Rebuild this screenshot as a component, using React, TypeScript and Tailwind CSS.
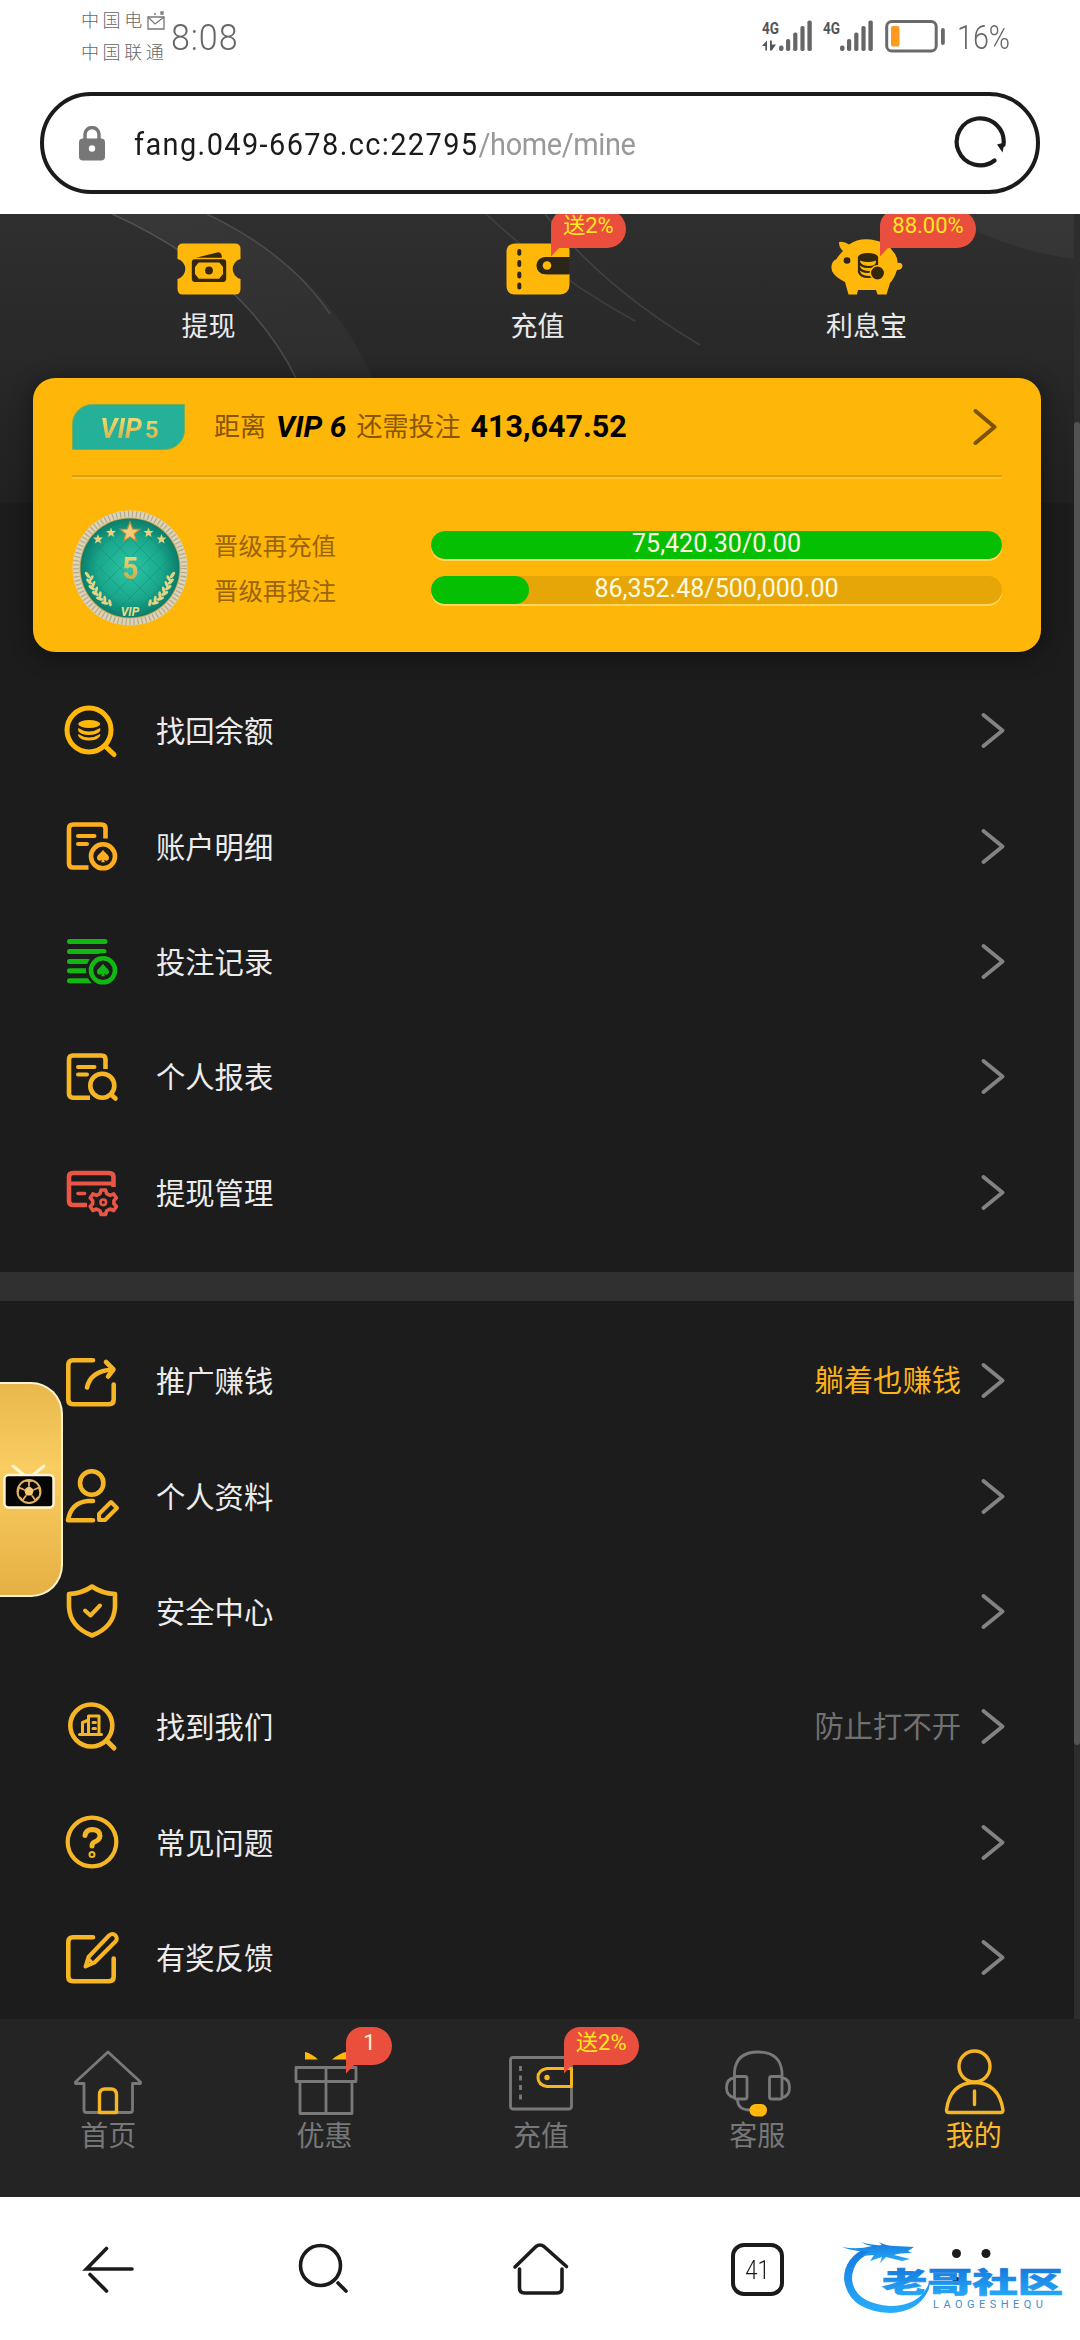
import type { ReactNode } from 'react';

const GOLD = '#ffb70a';
const LIST_GOLD = '#f5b524';

function StatusBar() {
  return (
    <div className="flex h-[92px] justify-between pl-[81px] pr-[74px] text-[#666]">
      <div className="flex">
        <div className="flex w-[90px] flex-col pt-[9px] text-[18px] font-light tracking-[3.6px] whitespace-nowrap">
          <div className="flex h-[32px] items-start leading-[24px]">
            <span>中国电</span>
            <svg width="20" height="20" viewBox="0 0 20 20" className="mt-[2px]" fill="none" stroke="#777" strokeWidth="1.3">
              <path d="M2 6 L2 18 L18 18 L18 6 Z" />
              <path d="M2 6 L9 13 L18 6" />
              <path d="M8 3h2M15 1h2v2h-2z" />
            </svg>
          </div>
          <div className="leading-[24px]">中国联通</div>
        </div>
        <div className="pt-[18px]">
          <span className="inline-block origin-left scale-x-[.92] text-[37px] leading-[40px] font-light tracking-[1px]">8:08</span>
        </div>
      </div>
      <div className="flex items-start pt-[20px]">
        <Signal arrows />
        <div className="w-[10px]" />
        <Signal />
        <svg width="60" height="34" viewBox="0 0 60 34" className="ml-[11px] -mt-px" fill="none">
          <rect x="1.7" y="2.5" width="49.5" height="29.5" rx="5" stroke="#6a6a6a" strokeWidth="3" />
          <rect x="6" y="7" width="8.5" height="20.5" rx="2" fill="#ff9a1e" />
          <rect x="56" y="9" width="3.8" height="17" rx="1.9" fill="#6a6a6a" />
        </svg>
        <span className="ml-[12px] inline-block w-[49px] origin-left scale-x-[.87] text-[33px] leading-[36px] font-light">16%</span>
      </div>
    </div>
  );
}

function Signal({ arrows = false }: { arrows?: boolean }) {
  return (
    <svg width="51" height="32" viewBox="0 0 51 32" className="overflow-visible">
      <text x="0" y="14" fontSize="17" fontWeight="700" fill="#555" textLength="17" lengthAdjust="spacingAndGlyphs">4G</text>
      {arrows && <path d="M0 26 L5 20.5 V30.5 H3.300 V26 Z M8 20.5 H9.800 V24.500 H14 L9.800 30.500 H8 Z" fill="#555" />}
      <g fill="#666">
        <rect x="17" y="25.5" width="4.5" height="5.5" rx="2" />
        <rect x="24" y="19" width="4.2" height="12" rx="1.8" />
        <rect x="31.2" y="12.5" width="4.2" height="18.5" rx="1.8" />
        <rect x="38.4" y="6" width="4.2" height="25" rx="1.8" />
        <rect x="45.4" y="0.5" width="4.4" height="30.5" rx="1.8" />
      </g>
    </svg>
  );
}

function AddressBar() {
  return (
    <div className="mx-[40px] flex h-[102px] items-center rounded-full border-4 border-[#1b1b1b] bg-white pl-[35px] pr-[30px]">
      <svg width="26" height="35" viewBox="0 0 26 35">
        <path d="M6 15 V8.5 a7 7 0 0 1 14 0 V15" fill="none" stroke="#777" strokeWidth="3.4" />
        <rect x="0" y="12.5" width="26" height="22" rx="4" fill="#777" />
        <circle cx="13" cy="22.5" r="3.2" fill="#fff" />
      </svg>
      <div className="ml-[29px] flex-1 pt-[2px] whitespace-nowrap">
        <span className="inline-block origin-left scale-x-[.904] text-[32px] leading-[40px] tracking-[1.55px] text-[#1b1b1b]">
          fang.049-6678.cc:22795<span className="tracking-[-.4px] text-[#999]">/home/mine</span>
        </span>
      </div>
      <svg width="52" height="54" viewBox="0 0 52 54" fill="none" className="-mt-px">
        <path d="M40.5 44.5 A23.5 23.5 0 1 1 49.5 29" stroke="#1b1b1b" strokeWidth="4.2" strokeLinecap="round" />
        <path d="M43 28.5 L50.5 26.5 L48.5 36.5 Z" fill="#1b1b1b" />
      </svg>
    </div>
  );
}

function Badge({ children, className }: { children: ReactNode; className: string }) {
  return (
    <div className={`absolute z-10 flex h-[38px] justify-center rounded-r-[19px] rounded-tl-[16px] bg-[#ea4f3d] pt-[3px] text-[22px] leading-[26px] ${className}`}>
      {children}
      <svg width="13" height="10" viewBox="0 0 13 10" className="absolute top-[37px] left-0">
        <path d="M0 0 H13 L8 1 L0 9.5 Z" fill="#ea4f3d" />
      </svg>
    </div>
  );
}

function HeaderBackdrop() {
  return (
    <svg width="1074" height="289" viewBox="0 0 1074 289" className="absolute top-0 left-0" fill="none">
      <defs>
        <linearGradient id="head" x1="0" y1="0" x2="0" y2="1">
          <stop offset="0" stopColor="#2f2f2f" />
          <stop offset="0.5" stopColor="#282828" />
          <stop offset="1" stopColor="#202020" />
        </linearGradient>
        <linearGradient id="band" x1="0" y1="0" x2="1" y2="1">
          <stop offset="0" stopColor="#fff" stopOpacity="0.04" />
          <stop offset="1" stopColor="#fff" stopOpacity="0.025" />
        </linearGradient>
      </defs>
      <rect width="1074" height="289" fill="url(#head)" />
      <path d="M112 0 Q245 60 297 166 H373 Q330 60 207 0 Z" fill="url(#band)" />
      <g stroke="#fff" strokeOpacity="0.15" strokeWidth="1.6">
        <path d="M112 0 Q245 60 297 166" />
        <path d="M207 0 Q290 40 330 100" strokeOpacity="0.12" />
        <path d="M486 0 Q550 60 635 107" strokeOpacity="0.09" />
        <path d="M545 0 Q605 75 700 131" strokeOpacity="0.1" />
      </g>
      <path d="M945 0 H1074 V45 Q1000 35 945 0 Z" fill="#fff" fillOpacity="0.04" />
    </svg>
  );
}

function CashIcon() {
  return (
    <svg width="64" height="52" viewBox="0 0 64 52">
      <path
        d="M6 0.5 H58 Q63.5 .5 63.5 6 V16 a10.3 10.3 0 0 0 0 20 V46 Q63.5 51.5 58 51.5 H6 Q.5 51.5 .5 46 V36 a10.3 10.3 0 0 0 0 -20 V6 Q.5 .5 6 .5 Z"
        fill={GOLD}
      />
      <path d="M19 14.8 L41 9.3 Q44.5 9 45 14.8 Z" fill="#33280d" />
      <rect x="16.4" y="17.8" width="31.2" height="19.5" rx="1.5" stroke="#33280d" strokeWidth="3.2" fill="none" />
      <path d="M18 19 h4 l-4 5 z M46 19 h-4 l4 5 z M18 36 h4 l-4 -5 z M46 36 h-4 l4 -5 z" fill="#33280d" />
      <circle cx="32" cy="27.5" r="3.9" fill="#33280d" />
    </svg>
  );
}

function WalletIcon() {
  return (
    <svg width="64" height="52" viewBox="0 0 64 52">
      <path d="M9 .5 H57 Q63.5 .5 63.5 7 V14 H40 a9.5 9.5 0 0 0 0 17.2 H63.5 V42 Q63 51 54 51.5 H9 Q.5 51 .5 43 V8 Q1 1 9 .5 Z" fill={GOLD} />
      <path d="M63 14 H39 a8.6 8.6 0 0 0 0 17.2 H63 Z" fill="#2c2619" />
      <path d="M13.3 8 V10.8 M13.3 19 V22 M13.3 30.5 V33.5 M13.3 41.5 V44.5" stroke="#2c2619" strokeWidth="4" strokeLinecap="round" />
      <circle cx="41" cy="22.5" r="4.3" fill={GOLD} />
    </svg>
  );
}

function PiggyIcon() {
  return (
    <svg width="72" height="56" viewBox="0 0 72 56">
      <path
        d="M8 3 Q13 2 18 5.5 Q27 -1 40 .5 Q57 2.500 64 15 Q67 20 66.500 24 Q71 23 71.500 27 Q71 31 66 31 Q63 40 59 44 L55.500 55.500 H46.500 L45 51 H27 L26 55.500 H17.500 L14 43 Q6 39 2.500 34.500 Q0 32 .5 27 Q1 22 5.500 20 Q8 16 12 12 Q8 9 8 3 Z"
        fill={GOLD}
      />
      <ellipse cx="16" cy="21.500" rx="3.400" ry="3.200" fill="#2c2619" />
      <g fill={GOLD} stroke="#33280d" strokeWidth="2.200">
        <path d="M28 28 V33 Q30 38 37 38 Q46 38 46 33 V28" />
        <path d="M28 23 V28 Q30 33 37 33 Q46 33 46 28 V23" />
        <path d="M28 18 V23 Q30 28 37 28 Q46 28 46 23 V18" />
        <ellipse cx="37" cy="18.500" rx="9" ry="3.500" fill="#33280d" />
      </g>
      <circle cx="46.500" cy="34" r="7.200" fill="#33280d" stroke={GOLD} strokeWidth="1.500" />
    </svg>
  );
}

function Shortcut({ icon, label, badge, badgeClass = '' }: { icon: ReactNode; label: string; badge?: string; badgeClass?: string }) {
  return (
    <div className="relative flex w-[329px] flex-col items-center">
      <div className="flex h-[52px] items-end justify-center">{icon}</div>
      <div className="mt-[14px] text-[27px] leading-[36px] text-[#eaeaea]">{label}</div>
      {badge && <Badge className={`-top-[33px] text-[#ffe81f] ${badgeClass}`}>{badge}</Badge>}
    </div>
  );
}

function Medal() {
  const leaves = [0, 1, 2, 3, 4, 5];
  return (
    <svg width="118" height="118" viewBox="0 0 118 118">
      <defs>
        <radialGradient id="felt">
          <stop offset="0" stopColor="#2cc6a6" />
          <stop offset="0.65" stopColor="#1aa78b" />
          <stop offset="1" stopColor="#0b7d6a" />
        </radialGradient>
        <linearGradient id="goldText" x1="0" y1="0" x2="0" y2="1">
          <stop offset="0" stopColor="#f5e28a" />
          <stop offset="1" stopColor="#c59a36" />
        </linearGradient>
        <pattern id="quilt" width="20" height="20" patternUnits="userSpaceOnUse" x="9" y="9">
          <path d="M0 10 L10 0 L20 10 L10 20 Z" fill="none" stroke="#0f8d76" strokeWidth="1" strokeOpacity="0.45" />
        </pattern>
      </defs>
      <circle cx="59" cy="59" r="57.500" fill="#ddd3b8" />
      <circle cx="59" cy="59" r="54" fill="none" stroke="#b3a98e" strokeWidth="6" strokeDasharray="1.2 2.8" />
      <circle cx="59" cy="59" r="50.500" fill="#c9a650" />
      <circle cx="59" cy="59" r="49.500" fill="url(#felt)" />
      <circle cx="59" cy="59" r="48" fill="url(#quilt)" />
      <path d="M59 13 L61.700 20 L69 20.300 L63.300 25 L65.300 32 L59 28 L52.700 32 L54.700 25 L49 20.300 L56.300 20 Z" fill="#f0cc7a" stroke="#c08a35" strokeWidth="1.200" />
      <g fill="#ecd27c">
        <path d="M40 18.500 l1.300 3.400 3.700.2-2.900 2.300 1 3.600-3.100-2-3.100 2 1-3.600-2.900-2.300 3.700-.2z" />
        <path d="M77.500 18.500 l1.300 3.400 3.700.2-2.900 2.300 1 3.600-3.100-2-3.100 2 1-3.600-2.900-2.300 3.700-.2z" />
        <path d="M27 25 l1.300 3.400 3.700.2-2.900 2.300 1 3.600-3.100-2-3.100 2 1-3.600-2.900-2.300 3.700-.2z" />
        <path d="M90.500 25 l1.300 3.400 3.700.2-2.900 2.300 1 3.600-3.100-2-3.100 2 1-3.600-2.900-2.300 3.700-.2z" />
      </g>
      <g fill="#e3d487">
        {leaves.map((i) => (
          <g key={i}>
            <g transform={`rotate(${-i * 9} 59 59) translate(16.500 66)`}>
              <ellipse rx="1.600" ry="3.800" transform="rotate(-35)" />
              <ellipse cx="5" cy="1" rx="1.500" ry="3.600" transform="rotate(32)" />
            </g>
            <g transform={`rotate(${i * 9} 59 59) translate(101.500 66)`}>
              <ellipse rx="1.600" ry="3.800" transform="rotate(35)" />
              <ellipse cx="-5" cy="1" rx="1.500" ry="3.600" transform="rotate(-32)" />
            </g>
          </g>
        ))}
      </g>
      <text x="59" y="70" textAnchor="middle" fontSize="31" fontWeight="700" fill="url(#goldText)" textLength="16" lengthAdjust="spacingAndGlyphs">5</text>
      <text x="59" y="107" textAnchor="middle" fontSize="12" fontWeight="700" fontStyle="italic" fill="#e8dc8c">VIP</text>
    </svg>
  );
}

function Progress({ label, value, percent }: { label: string; value: string; percent: number }) {
  return (
    <div className="flex h-[45px] items-start">
      <div className="w-[217px] text-[24.400px] leading-[32px] text-[#9b640a]">{label}</div>
      <div className="relative h-[28px] w-[571px] overflow-hidden rounded-full bg-[#e7a607] shadow-[0_2px_0_#ffd75e]">
        <div className="h-full rounded-full bg-[#05bf02]" style={{ width: `${percent}%` }} />
        <div className="absolute inset-0 text-center text-[25px] leading-[25px] text-[#fffbe0]">{value}</div>
      </div>
    </div>
  );
}

function VipCard() {
  return (
    <div className="relative ml-[33px] h-[274px] w-[1008px] rounded-[22px] bg-[#feb709] px-[39px] pt-[26px] shadow-[0_4px_22px_rgba(0,0,0,.45)]">
      <div className="flex h-[46px] items-center">
        <div className="flex h-[46px] w-[113px] items-center justify-center rounded-tl-[20px] rounded-br-[20px] border border-[#7dad52] bg-[#25b199] pt-[4px]">
          <span className="bg-gradient-to-b from-[#f4e27c] to-[#d3a63a] bg-clip-text pr-1 pl-[6px] text-[27px] leading-[30px] font-bold text-transparent italic">
            VIP<span className="ml-[3px] text-[24px] not-italic">5</span>
          </span>
        </div>
        <div className="ml-[29px] flex items-center text-[26px] leading-[40px] whitespace-nowrap text-[#8a5500]">
          <span>距离</span>
          <span className="ml-[10px] text-[30px] font-bold text-black italic">VIP 6</span>
          <span className="ml-[10px]">还需投注</span>
          <span className="ml-[10px] text-[30.500px] font-bold text-black">413,647.52</span>
        </div>
        <svg width="24" height="36" viewBox="0 0 24 36" fill="none" className="mr-[5px] ml-auto">
          <path d="M2.500 2 L21.500 18 L2.500 34" stroke="#7c5307" strokeWidth="4" strokeLinecap="round" strokeLinejoin="round" />
        </svg>
      </div>
      <div className="mt-[25px] h-[4px] border-t-2 border-b-2 border-t-[#dfa00a] border-b-[#ffc42d]" />
      <div className="flex">
        <div className="mt-[30px] -ml-px w-[143px]">
          <Medal />
        </div>
        <div className="mt-[52px]">
          <Progress label="晋级再充值" value="75,420.30/0.00" percent={100} />
          <Progress label="晋级再投注" value="86,352.48/500,000.00" percent={17.2} />
        </div>
      </div>
    </div>
  );
}

function RowIcon({ color, children }: { color: string; children: ReactNode }) {
  return (
    <svg width="56" height="56" viewBox="0 0 56 56" fill="none" stroke={color} strokeWidth="4.600" strokeLinecap="round" strokeLinejoin="round">
      {children}
    </svg>
  );
}

const SPADE = 'M0 -6.500 C2 -3 6 -1.500 6 1.500 C6 5 2 5 .8 3.300 L2 6 H-2 L-.8 3.300 C-2 5 -6 5 -6 1.500 C-6 -1.500 -2 -3 0 -6.500 Z';

const recoverIcon = (
  <RowIcon color={GOLD}>
    <circle cx="25" cy="26" r="22" strokeWidth="5" />
    <path d="M41 42 L50 50.500" strokeWidth="5" />
    <g fill={GOLD} stroke="none">
      <ellipse cx="25.200" cy="20" rx="11" ry="4" />
      <path d="M14.200 24 Q25 31 36.200 24 V27 Q33 31 25 31 Q17 31 14.200 27 Z" />
      <path d="M14.200 30 Q25 37 36.200 30 V32 Q33 36.500 25 36.500 Q17 36.500 14.200 32 Z" />
    </g>
  </RowIcon>
);

const ledgerIcon = (
  <RowIcon color="#ffae1f">
    <path d="M24.500 48.500 H9 Q5 48.500 5 44.500 V9.500 Q5 5.500 9 5.500 H37.500 Q41.500 5.500 41.500 9.500 V19.500" strokeLinecap="butt" />
    <path d="M14 17 H30.500 M14 25 H23" strokeWidth="4" />
    <circle cx="39" cy="37.300" r="12" />
    <path d={SPADE} transform="translate(39 37.300)" fill="#ffae1f" stroke="none" />
  </RowIcon>
);

const betsIcon = (
  <RowIcon color="#12b812">
    <path d="M5.500 7.500 H41 M5.500 17.500 H40 M5.500 27.500 H24 M5.500 36.700 H22 M5.500 46.700 H26" strokeWidth="5" />
    <circle cx="39" cy="36.300" r="17" fill="#1c1c1c" stroke="none" />
    <circle cx="39" cy="36.300" r="12" />
    <path d={SPADE} transform="translate(39 36.300)" fill="#12b812" stroke="none" />
  </RowIcon>
);

const reportIcon = (
  <RowIcon color={LIST_GOLD}>
    <path d="M26 47.700 H9 Q5 47.700 5 43.700 V9.500 Q5 5.500 9 5.500 H37.500 Q41.500 5.500 41.500 9.500 V19" strokeLinecap="butt" />
    <path d="M14 17 H30.500 M14 24.500 H23" strokeWidth="4" />
    <circle cx="38.300" cy="35.700" r="12" />
    <path d="M47 44.500 L51.500 48.500" />
  </RowIcon>
);

const withdrawIcon = (
  <RowIcon color="#ea5545">
    <path d="M23 40 H9 Q5 40 5 36 V12 Q5 8 9 8 H45 Q49.500 8 49.500 12 V22" strokeLinecap="butt" />
    <path d="M5 18.500 H49.500" strokeLinecap="butt" strokeWidth="4" />
    <path d="M14 28.500 H20.500" strokeWidth="3.600" />
    <path
      d="M37 25 h4.600 l1 3.600 3.500 1.800 3.600-1.500 2.700 4 -2.500 2.800 v3 l2.500 2.800 -2.700 4 -3.600-1.500 -3.500 1.800 -1 3.600 h-4.600 l-1-3.600 -3.500-1.800 -3.600 1.500 -2.700-4 2.500-2.800 v-3 l-2.500-2.800 2.700-4 3.600 1.500 3.500-1.800 z"
      strokeWidth="3.600"
    />
    <circle cx="39.300" cy="37.300" r="2.800" strokeWidth="2.600" />
  </RowIcon>
);

const shareIcon = (
  <RowIcon color={LIST_GOLD}>
    <path d="M29 6.300 H9 Q4.300 6.300 4.300 11 V45.500 Q4.300 50.200 9 50.200 H45 Q49.700 50.200 49.700 45.500 V30.500" />
    <path d="M23 33.500 Q26.500 17 48.500 15.500 M42 8 L49.500 15.500 L44 22.500" />
  </RowIcon>
);

const profileIcon = (
  <RowIcon color={LIST_GOLD}>
    <circle cx="27.700" cy="14" r="11.700" />
    <path d="M29 32 H24 Q7 33.500 4 51.300 H29" />
    <path d="M35 45 L47 33 L53 39 L41 51 H35 Z" strokeWidth="4" />
  </RowIcon>
);

const shieldIcon = (
  <RowIcon color={LIST_GOLD}>
    <path d="M28 2.500 Q38 9.500 51 10 V23 Q50 43 28 51.500 Q6 43 5 23 V10 Q18 9.500 28 2.500 Z" />
    <path d="M21 26.500 L26.500 31.500 L36 21.500" strokeWidth="4" />
  </RowIcon>
);

const findIcon = (
  <RowIcon color={LIST_GOLD}>
    <circle cx="27.300" cy="25.500" r="21" />
    <path d="M43 41 L50 48" strokeWidth="5" />
    <g strokeWidth="3">
      <path d="M15.500 34.500 H37.500 M18.500 34 V22.500 L23.500 20.500 M24.500 34 V16 H35 V34" />
      <path d="M29 22.500 H31.500 M29 28.500 H31.500" />
    </g>
  </RowIcon>
);

const faqIcon = (
  <RowIcon color={LIST_GOLD}>
    <circle cx="28" cy="27" r="24.300" strokeWidth="4.200" />
    <path d="M21 20.500 Q22 14.500 28.500 14.500 Q36 15 36 21 Q35.500 25 30.500 27 Q28 28 28 31" strokeWidth="5" />
    <circle cx="28" cy="39.500" r="1" strokeWidth="5" />
  </RowIcon>
);

const feedbackIcon = (
  <RowIcon color={LIST_GOLD}>
    <path d="M29 6.300 H9 Q4.300 6.300 4.300 11 V45.500 Q4.300 50.200 9 50.200 H45 Q49.700 50.200 49.700 45.500 V27.500" />
    <path d="M21.500 35.500 L24.500 26 L45 4.500 Q48.500 1.500 51.500 4.500 Q54 7.500 51.500 10.500 L30.500 31.500 Z" strokeWidth="4" />
    <path d="M22 35 L25 28 L28.500 32 Z" strokeWidth="3" />
  </RowIcon>
);

type Item = { icon: ReactNode; label: string; note?: string; noteClass?: string };

const accountItems: Item[] = [
  { icon: recoverIcon, label: '找回余额' },
  { icon: ledgerIcon, label: '账户明细' },
  { icon: betsIcon, label: '投注记录' },
  { icon: reportIcon, label: '个人报表' },
  { icon: withdrawIcon, label: '提现管理' },
];

const serviceItems: Item[] = [
  { icon: shareIcon, label: '推广赚钱', note: '躺着也赚钱', noteClass: 'text-[#fdb319]' },
  { icon: profileIcon, label: '个人资料' },
  { icon: shieldIcon, label: '安全中心' },
  { icon: findIcon, label: '找到我们', note: '防止打不开', noteClass: 'text-[#717171]' },
  { icon: faqIcon, label: '常见问题' },
  { icon: feedbackIcon, label: '有奖反馈' },
];

function MenuRow({ icon, label, note, noteClass }: Item) {
  return (
    <div className="flex h-[115.400px] items-center pr-[75px] pl-[64px]">
      {icon}
      <span className="ml-[36px] pt-px text-[29.300px] leading-[40px] text-[#ececec]">{label}</span>
      <span className={`mr-[20px] ml-auto pb-px text-[29.300px] leading-[40px] ${noteClass ?? ''}`}>{note}</span>
      <svg width="24" height="36" viewBox="0 0 24 36" fill="none" className="-mt-px">
        <path d="M2.500 2 L21.500 17.500 L2.500 33" stroke="#838383" strokeWidth="3.800" strokeLinecap="round" strokeLinejoin="round" />
      </svg>
    </div>
  );
}

function FloatingTv() {
  return (
    <div className="absolute top-[1382px] left-0 flex h-[215px] w-[63px] items-center rounded-r-[32px] border-2 border-l-0 border-[#fbf3cf] bg-gradient-to-b from-[#e9b84c] via-[#f9cd62] via-40% to-[#e6b043]">
      <svg width="54" height="48" viewBox="0 0 54 48" fill="none" className="-mt-[5px] ml-[2px]">
        <path d="M11 3 L22 12 M42 3 L31 12" stroke="#fff6cf" strokeWidth="3" strokeLinecap="round" />
        <rect x="2.500" y="12" width="49" height="32.500" rx="4" fill="#050505" stroke="#fff6d8" strokeWidth="2.400" />
        <circle cx="27" cy="28.500" r="11.500" fill="#0b0803" stroke="#e3b163" strokeWidth="2" />
        <path d="M27 23 L32 26.800 L30 32.500 H24 L22 26.800 Z" fill="#f4c678" />
        <path d="M27 23 V18.500 M32 26.800 L37 24.500 M30 32.500 L33.500 37.500 M24 32.500 L20.500 37.500 M22 26.800 L17 24.500" stroke="#e3b163" strokeWidth="1.800" />
        <path d="M27 18.500 L31 17.500 M27 18.500 L23 17.500 M37 24.500 L38 29 M17 24.500 L16 29 M33.500 37.500 L36 34 M20.500 37.500 L18 34" stroke="#e3b163" strokeWidth="1.600" />
      </svg>
    </div>
  );
}

function TabItem({ label, active = false, children, badge, badgeClass = '' }: { label: string; active?: boolean; children: ReactNode; badge?: string; badgeClass?: string }) {
  return (
    <div className="relative flex w-[216.400px] shrink-0 flex-col items-center pt-[29px]">
      <svg width="72" height="70" viewBox="0 0 72 70" fill="none" stroke="#797979" strokeWidth="2.800" strokeLinejoin="round" strokeLinecap="round">
        {children}
      </svg>
      <span className={`mt-px text-[28px] leading-[36px] ${active ? 'text-[#fdb92a]' : 'text-[#777]'}`}>{label}</span>
      {badge && <Badge className={`top-[8px] ${badgeClass}`}>{badge}</Badge>}
    </div>
  );
}

function TabBar() {
  return (
    <div className="relative flex h-[178px] w-[1080px] overflow-hidden bg-[#242424]">
      <TabItem label="首页">
        <path d="M36 4 L68.500 34 V35.500 H60.500 V62 Q60.500 64.500 58 64.500 H14.500 Q12 64.500 12 62 V35.500 H3.500 V34 Z" />
        <path d="M27.500 64.500 V47 Q27.500 41 33 41 H39 Q44.500 41 44.500 47 V64.500 Z" stroke={LIST_GOLD} strokeWidth="3.400" />
      </TabItem>
      <TabItem label="优惠" badge="1" badgeClass="left-[130px] w-[46px] text-[#fff3d6]">
        <path d="M16 4 Q22 5 29 11.500 H16 Z M57 4 Q51 5 43 11.500 H57 Z" fill={GOLD} stroke="none" />
        <path d="M7 19.500 H67 V33.500 H7 Z M11 33.500 V65.500 H63 V33.500 M37 19.500 V65.500" />
      </TabItem>
      <TabItem label="充值" badge="送2%" badgeClass="left-[131px] w-[75px] text-[#ffe81f]">
        <path d="M66.500 20 V12 Q66.500 9.500 64 9.500 H8 Q5.500 9.500 5.500 12 V58 Q5.500 61 8 61 H64 Q66.500 61 66.500 58 V40" />
        <path d="M15.500 18 V52" strokeDasharray="5 4.500" strokeLinecap="butt" />
        <path d="M66.500 20.500 H42 Q33 22 33 29.500 Q33 37 42 38.500 H66.500 Z" stroke={LIST_GOLD} strokeWidth="3" />
        <circle cx="42" cy="29.500" r="2.700" fill={LIST_GOLD} stroke="none" />
      </TabItem>
      <TabItem label="客服">
        <path d="M13.500 29 V24 Q15 4 37 4 Q59 4 61 24 V29" />
        <rect x="13.500" y="28.500" width="12.500" height="22.500" rx="2" />
        <rect x="48.500" y="28.500" width="12.500" height="22.500" rx="2" />
        <path d="M13 30 Q5.500 31 5.500 39.500 Q5.500 48 13 49.500 M61.500 30 Q68.500 31 68.500 39.500 Q68.500 48 61.500 49.500 M16.500 52 Q17 62 29 62" />
        <rect x="28.500" y="56" width="17.500" height="12.500" rx="6.200" fill={GOLD} stroke="none" />
      </TabItem>
      <TabItem label="我的" active>
        <g stroke={LIST_GOLD} strokeWidth="3.400">
          <circle cx="36.500" cy="18.500" r="15.500" />
          <path d="M36.500 34.500 Q12 35 8.500 62 Q8.500 64.500 11 64.500 H62.500 Q65 64.500 65 62 Q61 35 36.500 34.500 Z M36.500 43 V56.500" />
        </g>
      </TabItem>
    </div>
  );
}

function BrowserNav() {
  return (
    <div className="relative flex h-[143px] bg-white pt-[40px]">
      <div className="flex flex-1 justify-center">
        <svg width="64" height="64" viewBox="0 0 64 64" fill="none" stroke="#1b1b1b" strokeWidth="3.600" strokeLinecap="round">
          <path d="M30.500 11.500 L10.500 32 H56 M14 37.500 L30.500 54" />
        </svg>
      </div>
      <div className="flex flex-1 justify-center">
        <svg width="64" height="64" viewBox="0 0 64 64" fill="none" stroke="#1b1b1b" strokeWidth="3.600" strokeLinecap="round">
          <circle cx="28.500" cy="28.500" r="20" />
          <path d="M46 46 L54 54" />
        </svg>
      </div>
      <div className="flex flex-1 justify-center">
        <svg width="64" height="64" viewBox="0 0 64 64" fill="none" stroke="#1b1b1b" strokeWidth="3.600" strokeLinecap="round" strokeLinejoin="round">
          <path d="M7 30 L28 9.500 Q32 6.500 36 9.500 L58.500 29.500" />
          <path d="M11.500 32 V51 Q11.500 56 16.500 56 H49 Q54 56 54 51 V32" />
        </svg>
      </div>
      <div className="flex flex-1 justify-center">
        <div className="mt-[6px] ml-[2px] flex h-[53px] w-[53px] items-center justify-center rounded-[13px] border-4 border-[#1b1b1b] text-[26px] leading-none font-light text-[#1b1b1b]">
          <span className="scale-x-[.85]">41</span>
        </div>
      </div>
      <div className="flex flex-1 justify-center">
        <svg width="64" height="64" viewBox="0 0 64 64" fill="#1b1b1b">
          <circle cx="16.500" cy="16.500" r="4.500" />
          <circle cx="46" cy="16.500" r="4.500" />
          <circle cx="16.500" cy="44" r="4" />
        </svg>
      </div>
      <ForumLogo />
    </div>
  );
}

function ForumLogo() {
  return (
    <svg width="230" height="84" viewBox="0 0 230 84" className="absolute top-[40px] left-[838px]">
      <defs>
        <linearGradient id="blue" x1="0" y1="0" x2="0" y2="1">
          <stop offset="0" stopColor="#1778dc" />
          <stop offset="1" stopColor="#27aefb" />
        </linearGradient>
      </defs>
      <g fill="url(#blue)">
        <path d="M38 14 Q14 21 14 42 Q16 66 52 69 Q82 69 91 46 Q92 50 90 54 Q80 75 52 76 Q10 74 6 42 Q6 20 30 10 Z" />
        <path d="M4 10 Q20 13 34 9 Q28 8 23 5 Q34 9 44 8 L41 5 Q48 9 57 9 L76 10 L70 14 L74 16 Q60 16 56 18 L72 22 L64 24 L48 20 L42 26 L44 20 L32 24 L36 18 L24 19 L32 14 Q16 15 4 10 Z" />
      </g>
      <text x="44" y="71" fontSize="38" fontWeight="900" fill="url(#blue)" stroke="url(#blue)" strokeWidth="1" textLength="181" lengthAdjust="spacingAndGlyphs" transform="translate(0 3.500) scale(1 .74)">
        老哥社区
      </text>
      <text x="95" y="71" fontSize="11" fill="#3f8fcc" textLength="110">LAOGESHEQU</text>
    </svg>
  );
}

export default function App() {
  return (
    <div className="relative h-[2340px] w-[1080px] overflow-hidden bg-white font-['Roboto','Noto_Sans_CJK_SC',sans-serif]">
      <StatusBar />
      <AddressBar />
      <div className="relative mt-[20px] h-[1805px] overflow-hidden bg-[#1c1c1c]">
        <HeaderBackdrop />
        <div className="relative flex h-[164px] pt-[29px] pl-[44px]">
          <Shortcut icon={<CashIcon />} label="提现" />
          <Shortcut icon={<WalletIcon />} label="充值" badge="送2%" badgeClass="left-[178px] w-[75px]" />
          <Shortcut icon={<PiggyIcon />} label="利息宝" badge="88.00%" badgeClass="left-[178px] w-[96px]" />
        </div>
        <VipCard />
        <div className="pt-[22px]">
          {accountItems.map((item) => (
            <MenuRow key={item.label} {...item} />
          ))}
        </div>
        <div className="mt-[21px] h-[29px] w-[1074px] bg-[#303030]" />
        <div className="pt-[23px]">
          {serviceItems.map((item) => (
            <MenuRow key={item.label} {...item} />
          ))}
        </div>
        <div className="absolute top-0 right-0 h-full w-[6px] bg-[#2d2d2d]">
          <div className="mt-[208px] h-[1323px] rounded-full bg-[#535353]" />
        </div>
      </div>
      <TabBar />
      <BrowserNav />
      <FloatingTv />
    </div>
  );
}
